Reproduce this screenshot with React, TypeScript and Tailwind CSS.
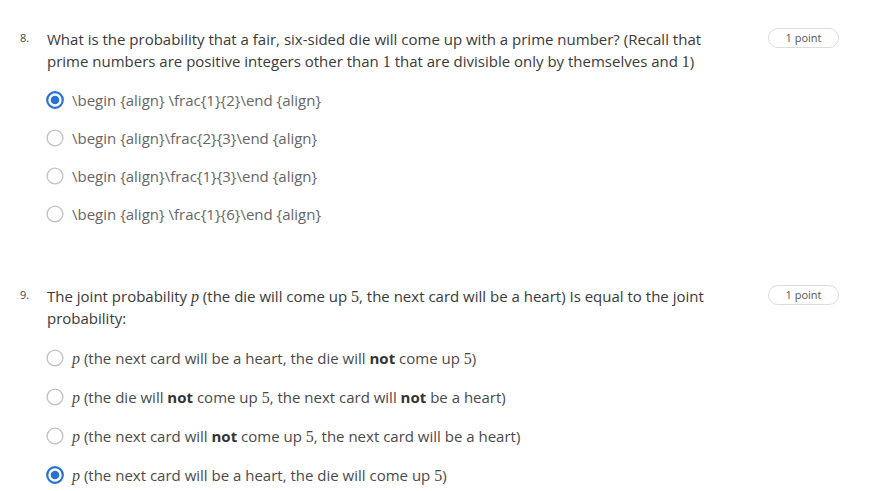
import React from 'react';

type Option = { content: React.ReactNode; selected?: boolean };

const M = ({ children, italic }: { children: React.ReactNode; italic?: boolean }) => (
  <span className={`font-['Liberation_Serif','DejaVu_Serif',serif] text-[16px] leading-none ${italic ? 'italic' : ''}`}>{children}</span>
);

const Radio = ({ selected }: { selected?: boolean }) => (
  <svg width="18" height="18" viewBox="0 0 18 18" className="shrink-0">
    {selected ? (
      <>
        <circle cx="9" cy="9" r="7.8" fill="none" stroke="#2a72d1" strokeWidth="2.2" />
        <circle cx="9" cy="9" r="4.3" fill="#2a72d1" />
      </>
    ) : (
      <circle cx="9" cy="9" r="7.9" fill="none" stroke="#c4c4c4" strokeWidth="1.4" />
    )}
  </svg>
);

const Question = ({
  num,
  text,
  options,
  rowH,
  optColor,
}: {
  num: string;
  text: React.ReactNode;
  options: Option[];
  rowH: string;
  optColor: string;
}) => (
  <div>
    <div className="flex items-start">
      <div className="w-[27px] text-[11px] leading-[20px] text-[#444]">{num}</div>
      <div className="w-[680px] text-[15px] leading-[22px] text-[#3a3a3a]">{text}</div>
      <div className="ml-auto mr-[48px] h-[20px] w-[71px] rounded-full border border-[#dcdcdc] text-center text-[11px] leading-[18px] text-[#555]">
        1 point
      </div>
    </div>
    <div className="mt-[9px]">
      {options.map((o, i) => (
        <div key={i} className={`flex items-center pl-[26px] ${rowH}`}>
          <Radio selected={o.selected} />
          <div className={`ml-[8px] text-[15px] leading-[22px] ${optColor}`}>{o.content}</div>
        </div>
      ))}
    </div>
  </div>
);

const B = ({ children }: { children: React.ReactNode }) => (
  <span className="font-bold text-[#333]">{children}</span>
);

export default function App() {
  return (
    <div className="min-h-screen bg-white pl-[20px] pt-[28px] font-['Open_Sans',sans-serif]">
      <Question
        num="8."
        rowH="h-[38px]"
        optColor="text-[#666]"
        text={
          <>
            What is the probability that a fair, six-sided die will come up with a prime number? (Recall that
            prime numbers are positive integers other than <M>1</M> that are divisible only by themselves and <M>1</M>)
          </>
        }
        options={[
          { content: '\\begin {align} \\frac{1}{2}\\end {align}', selected: true },
          { content: '\\begin {align}\\frac{2}{3}\\end {align}' },
          { content: '\\begin {align}\\frac{1}{3}\\end {align}' },
          { content: '\\begin {align} \\frac{1}{6}\\end {align}' },
        ]}
      />
      <div className="mt-[52px]">
        <Question
          num="9."
          rowH="h-[39px]"
          optColor="text-[#4a4a4a]"
          text={
            <>
              The joint probability <M italic>p</M> (the die will come up <M>5</M>, the next card will be a heart) Is
              equal to the joint probability:
            </>
          }
          options={[
            {
              content: (
                <>
                  <M italic>p</M> (the next card will be a heart, the die will <B>not</B> come up <M>5</M>)
                </>
              ),
            },
            {
              content: (
                <>
                  <M italic>p</M> (the die will <B>not</B> come up <M>5</M>, the next card will <B>not</B> be a heart)
                </>
              ),
            },
            {
              content: (
                <>
                  <M italic>p</M> (the next card will <B>not</B> come up <M>5</M>, the next card will be a heart)
                </>
              ),
            },
            {
              content: (
                <>
                  <M italic>p</M> (the next card will be a heart, the die will come up <M>5</M>)
                </>
              ),
              selected: true,
            },
          ]}
        />
      </div>
    </div>
  );
}
